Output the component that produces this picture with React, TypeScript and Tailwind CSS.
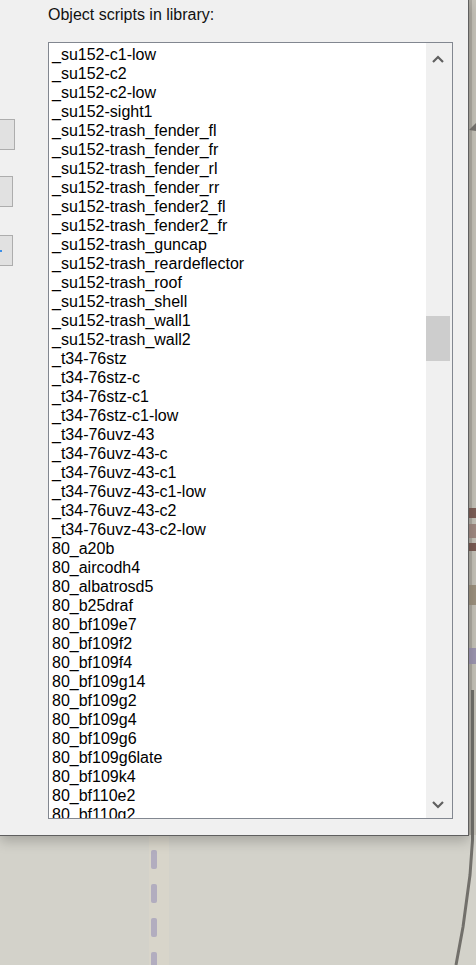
import React from "react";

const SCRIPTS = [
  "_su152-c1-low",
  "_su152-c2",
  "_su152-c2-low",
  "_su152-sight1",
  "_su152-trash_fender_fl",
  "_su152-trash_fender_fr",
  "_su152-trash_fender_rl",
  "_su152-trash_fender_rr",
  "_su152-trash_fender2_fl",
  "_su152-trash_fender2_fr",
  "_su152-trash_guncap",
  "_su152-trash_reardeflector",
  "_su152-trash_roof",
  "_su152-trash_shell",
  "_su152-trash_wall1",
  "_su152-trash_wall2",
  "_t34-76stz",
  "_t34-76stz-c",
  "_t34-76stz-c1",
  "_t34-76stz-c1-low",
  "_t34-76uvz-43",
  "_t34-76uvz-43-c",
  "_t34-76uvz-43-c1",
  "_t34-76uvz-43-c1-low",
  "_t34-76uvz-43-c2",
  "_t34-76uvz-43-c2-low",
  "80_a20b",
  "80_aircodh4",
  "80_albatrosd5",
  "80_b25draf",
  "80_bf109e7",
  "80_bf109f2",
  "80_bf109f4",
  "80_bf109g14",
  "80_bf109g2",
  "80_bf109g4",
  "80_bf109g6",
  "80_bf109g6late",
  "80_bf109k4",
  "80_bf110e2",
  "80_bf110g2",
];

function Chevron({ up }: { up?: boolean }) {
  return (
    <svg width="12" height="8" viewBox="0 0 12 8" className="block">
      <polyline
        points={up ? "1,7 6,2 11,7" : "1,1 6,6 11,1"}
        fill="none"
        stroke="#606060"
        strokeWidth="2.2"
      />
    </svg>
  );
}

/** The app canvas peeking out behind the dialog: a dashed guide, a stroke on the right edge. */
function Backdrop() {
  const dashes = [850, 884, 918, 952];
  return (
    <svg className="absolute inset-0" width="476" height="965" viewBox="0 0 476 965">
      <rect x="149" y="835" width="20" height="130" fill="#d8d5ca" />
      {dashes.map((y) => (
        <rect key={y} x="151" y={y} width="6" height="19" rx="2" fill="#b2adbf" />
      ))}
      <rect x="469" y="0" width="7" height="835" fill="#c6c3b9" />
      <rect x="469" y="0" width="3" height="835" fill="#aeaba2" />
      <path d="M469 130 L476 123 L476 131 Z" fill="#77746f" />
      <rect x="469" y="508" width="7" height="10" fill="#7d5f57" />
      <rect x="469" y="524" width="7" height="14" fill="#a08a82" />
      <rect x="469" y="543" width="7" height="8" fill="#7a5c54" />
      <rect x="469" y="585" width="7" height="20" fill="#9d927f" />
      <rect x="469" y="648" width="7" height="16" fill="#9d96b0" />
      <path
        d="M472.5 690 L472.5 840 L470 875 L463 927 L456 965"
        fill="none"
        stroke="#72706b"
        strokeWidth="3"
      />
    </svg>
  );
}

function SideButton({ wide, dot }: { wide?: boolean; dot?: boolean }) {
  return (
    <div
      className={`flex h-[31px] items-center border-y border-r border-[#adadad] bg-[#e1e1e1] ${
        wide ? "w-[15px]" : "w-[13px]"
      }`}
    >
      {dot && <span className="h-[2px] w-[2px] bg-[#3d8ee6]" />}
    </div>
  );
}

export default function App() {
  return (
    <div className="relative h-[965px] w-[476px] overflow-hidden bg-[#d3d2ca] font-['Liberation_Sans',Arial,sans-serif]">
      <Backdrop />
      <div className="relative flex h-[836px] w-[469px] border-r border-b border-[#5f5f5f] bg-[#f0f0f0] shadow-[0_5px_12px_rgba(0,0,0,0.22)]">
        <div className="flex w-[48px] flex-col pt-[119px]">
          <SideButton wide />
          <div className="mt-[26px]">
            <SideButton />
          </div>
          <div className="mt-[28px]">
            <SideButton dot />
          </div>
        </div>
        <div className="flex flex-col">
          <div className="mt-[5px] text-[16px] leading-[19px] text-[#111]">Object scripts in library:</div>
          <div className="mt-[18px] flex h-[777px] w-[405px] border border-[#828790] bg-white">
            <div className="flex-1 overflow-hidden pt-[2px] pl-[3px] text-[16px] leading-[19px] text-black">
              {SCRIPTS.map((name) => (
                <div key={name} className="whitespace-nowrap">
                  {name}
                </div>
              ))}
            </div>
            <div className="flex w-[26px] flex-col bg-[#f0f0f0]">
              <div className="flex h-[32px] items-center justify-center pr-[2px]">
                <Chevron up />
              </div>
              <div className="flex-1">
                <div className="mt-[241px] h-[45px] w-[24px] bg-[#cdcdcd]" />
              </div>
              <div className="flex h-[26px] items-center justify-center pr-[2px]">
                <Chevron />
              </div>
            </div>
          </div>
        </div>
      </div>
    </div>
  );
}
